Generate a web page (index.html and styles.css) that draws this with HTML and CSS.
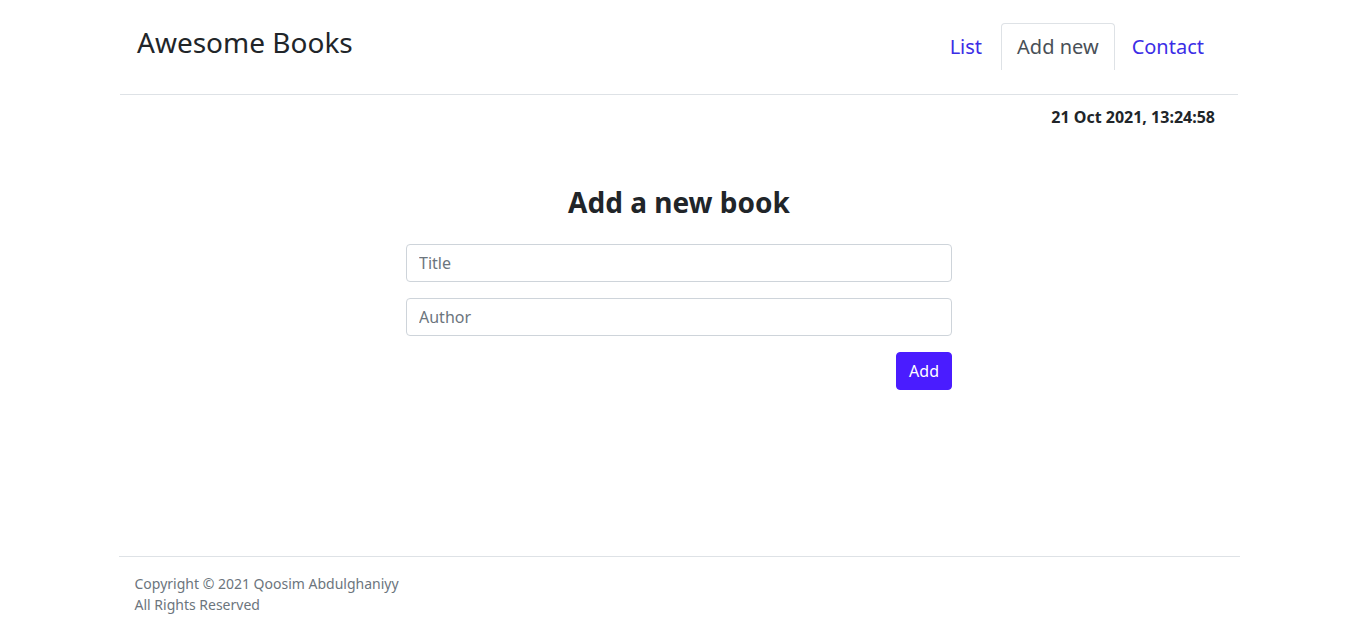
FILE: index.html
```html
<!DOCTYPE html>
<html lang="en">
<head>
<meta charset="utf-8">
<title>Awesome Books</title>
<link rel="stylesheet" href="styles.css">
</head>
<body>
<div class="page">
  <header class="top">
    <h1 class="brand">Awesome Books</h1>
    <nav>
      <ul class="tabs">
        <li><a class="tab-link" href="#">List</a></li>
        <li><a class="tab-link active" href="#">Add new</a></li>
        <li><a class="tab-link" href="#">Contact</a></li>
      </ul>
    </nav>
  </header>
  <main class="main">
    <p class="date">21 Oct 2021, 13:24:58</p>
    <section class="add">
      <h2 class="add-title">Add a new book</h2>
      <form class="form">
        <input class="field" type="text" placeholder="Title">
        <input class="field" type="text" placeholder="Author">
        <div class="actions"><button class="btn" type="button">Add</button></div>
      </form>
    </section>
  </main>
  <footer class="foot">
    <p>Copyright © 2021 Qoosim Abdulghaniyy</p>
    <p>All Rights Reserved</p>
  </footer>
</div>
</body>
</html>
```

FILE: styles.css
```css
* { box-sizing: border-box; }
html, body { margin: 0; padding: 0; }
body {
  font-family: "Noto Sans", "Open Sans", sans-serif;
  color: #212529;
  background: #fff;
  font-size: 16px;
  line-height: 1.5;
  padding-right: 3px;
}
.page {
  min-height: 100vh;
  display: flex;
  flex-direction: column;
  align-items: center;
}
.top {
  width: 1118px;
  height: 95px;
  border-bottom: 1px solid #dee2e6;
  display: flex;
  justify-content: space-between;
  align-items: flex-start;
  padding: 0 17px;
}
.brand {
  margin: 26px 0 0;
  font-size: 28px;
  font-weight: 400;
  line-height: 1.2;
}
.tabs {
  list-style: none;
  margin: 23px 0 0;
  padding: 0;
  display: flex;
}
.tab-link {
  display: block;
  padding: 8px 16px;
  font-size: 20px;
  line-height: 30px;
  color: #3b2de6;
  text-decoration: none;
  border: 1px solid transparent;
  border-bottom: 0;
  border-radius: 4px 4px 0 0;
}
.tab-link.active {
  color: #495057;
  border-color: #dee2e6;
  padding: 8px 15px;
  margin-left: 2px;
}
.main {
  width: 1118px;
  flex: 1;
}
.date {
  margin: 10px 0 0;
  padding-right: 23px;
  text-align: right;
  font-weight: 700;
}
.add {
  width: 546px;
  margin: 0 auto;
}
.add-title {
  margin: 57px 0 24px;
  font-size: 28px;
  line-height: 1.2;
  font-weight: 700;
  text-align: center;
}
.form {
  display: flex;
  flex-direction: column;
  gap: 16px;
}
.field {
  display: block;
  width: 100%;
  height: 38px;
  padding: 6px 12px;
  font: inherit;
  color: #212529;
  border: 1px solid #ced4da;
  border-radius: 4px;
}
.field::placeholder { color: #6c757d; }
.actions {
  display: flex;
  justify-content: flex-end;
}
.btn {
  height: 38px;
  padding: 6px 12px;
  font: inherit;
  color: #fff;
  background: #4a1cff;
  border: 1px solid #4a1cff;
  border-radius: 4px;
}
.foot {
  width: 1121px;
  border-top: 1px solid #dee2e6;
  padding: 16px 16px 14px;
  font-size: 14px;
  color: #6c757d;
}
.foot p { margin: 0; line-height: 21px; }
```
